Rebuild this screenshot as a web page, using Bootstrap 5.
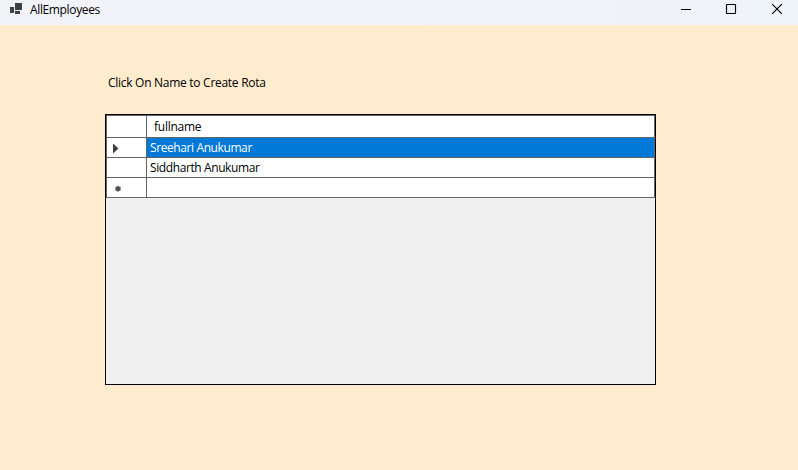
<!DOCTYPE html>
<html lang="en">
<head>
<meta charset="utf-8">
<title>AllEmployees</title>
<link href="https://cdn.jsdelivr.net/npm/bootstrap@5.3.0/dist/css/bootstrap.min.css" rel="stylesheet">
<style>
body{background:#ffebcd;font-family:"Open Sans","Noto Sans",sans-serif;font-size:12px;line-height:16px;color:#000;height:470px}
.titlebar{height:25px;background:linear-gradient(90deg,#f2f3f8,#eff3fa);padding-left:9px;padding-right:15px}
.app-name{margin-left:7px;margin-top:2px;letter-spacing:-.36px}
.win-controls{gap:34px;height:19px}
.hint{margin:50px 0 0 108px;letter-spacing:-.28px}
.grid-view{width:551px;height:271px;margin:23px 0 0 105px;border:1px solid #000;background:#f0f0f0}
.grid-table{border:1px solid #646464;border-bottom:0;width:549px}
.grid-line{height:20px;border-bottom:1px solid #646464;background:#fff}
.grid-line.head{height:22px}
.row-head{width:40px;border-right:1px solid #646464}
.cell{padding-left:3px;padding-top:1px;letter-spacing:-.4px}
.head .cell{padding-left:7px;letter-spacing:-.26px}
.selected .cell{background:#0078d7;color:#fff}
svg{display:block}
</style>
</head>
<body class="overflow-hidden">
<header class="titlebar d-flex align-items-start">
  <svg width="14" height="19" viewBox="0 0 14 19" fill="#404040" shape-rendering="crispEdges"><path d="M6 3h7v7H6zM1 7h4v6H1zM6 11h5v3H6z"/></svg>
  <span class="app-name">AllEmployees</span>
  <div class="win-controls d-flex align-items-center ms-auto">
    <svg width="12" height="19" fill="none" stroke="#000"><path d="M2 9.5h10"/></svg>
    <svg width="12" height="19" fill="none" stroke="#000" stroke-width="1.15"><rect x="1.5" y="4.5" width="9" height="9" rx=".7"/></svg>
    <svg width="12" height="19" fill="none" stroke="#000" stroke-width="1.15"><path d="M1.2 4.2l9.6 9.6m0-9.6l-9.6 9.6"/></svg>
  </div>
</header>
<main>
  <div class="hint">Click On Name to Create Rota</div>
  <div class="grid-view">
    <div class="grid-table">
      <div class="grid-line head d-flex"><div class="row-head"></div><div class="cell flex-fill d-flex align-items-center">fullname</div></div>
      <div class="grid-line selected d-flex"><div class="row-head"><svg width="20" height="19"><path d="M6 5.5v10l5.5-5z" fill="#404040"/></svg></div><div class="cell flex-fill d-flex align-items-center">Sreehari Anukumar</div></div>
      <div class="grid-line d-flex"><div class="row-head"></div><div class="cell flex-fill d-flex align-items-center">Siddharth Anukumar</div></div>
      <div class="grid-line d-flex"><div class="row-head"><svg width="20" height="19"><circle cx="11" cy="10.7" r="2.5" fill="#505050"/><path d="M11 7.6v6.2M8.2 9.2l5.6 3M13.8 9.2l-5.6 3" stroke="#505050" stroke-width=".9"/></svg></div><div class="cell flex-fill"></div></div>
    </div>
  </div>
</main>
<script src="https://cdn.jsdelivr.net/npm/bootstrap@5.3.0/dist/js/bootstrap.bundle.min.js"></script>
</body>
</html>
